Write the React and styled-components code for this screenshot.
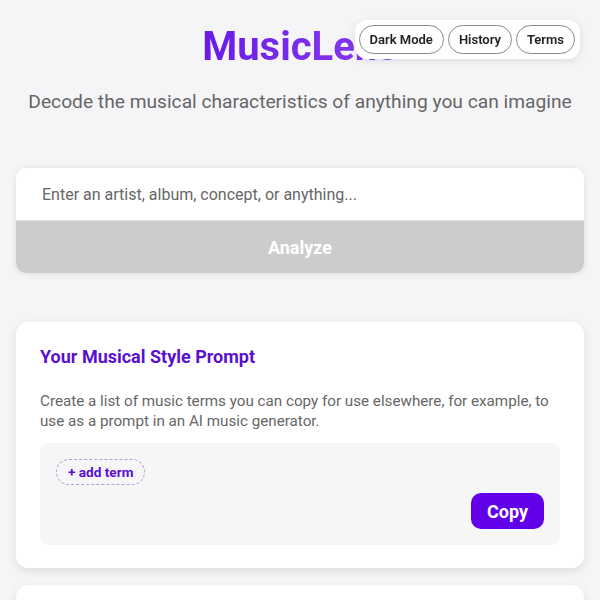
import React, { useState } from 'react';
import styled, { createGlobalStyle } from 'styled-components';

const GlobalStyle = createGlobalStyle`
  * {
    box-sizing: border-box;
  }

  body {
    margin: 0;
    background: #f5f5f7;
    font-family: Roboto, 'Liberation Sans', sans-serif;
    color: #333;
  }
`;

const Page = styled.div`
  padding: 0 16px 40px;
`;

const NavBox = styled.nav`
  position: fixed;
  top: 20px;
  right: 20px;
  display: flex;
  gap: 4px;
  padding: 5px 5px 5px 4px;
  background: #fff;
  border-radius: 12px;
  box-shadow: 0 2px 10px rgba(0, 0, 0, 0.1);
  z-index: 10;
`;

const NavButton = styled.button`
  height: 29px;
  padding: 0 10px;
  border: 1px solid #8a8a8a;
  border-radius: 15px;
  background: #fff;
  font-family: Roboto, sans-serif;
  font-size: 13px;
  font-weight: 600;
  color: #222;
  cursor: pointer;
`;

const Header = styled.header`
  padding-top: 23px;
  text-align: center;
`;

const Title = styled.h1`
  margin: 0;
  font-size: 40px;
  line-height: 48px;
  font-weight: 700;
  display: inline-block;
  background: linear-gradient(90deg, #6a1be6, #8a3cf2);
  -webkit-background-clip: text;
  background-clip: text;
  color: transparent;
`;

const Subtitle = styled.p`
  margin: 19px 0 0;
  font-size: 19.2px;
  line-height: 24px;
  color: #666;
`;

const SearchBox = styled.form`
  margin-top: 54px;
  background: #fff;
  border-radius: 10px;
  overflow: hidden;
  box-shadow: 0 1px 6px rgba(0, 0, 0, 0.1);
`;

const SearchInput = styled.input`
  display: block;
  width: 100%;
  height: 53px;
  padding: 0 26px;
  border: none;
  border-bottom: 1px solid #e6e6e6;
  font-family: Roboto, sans-serif;
  font-size: 16px;
  color: #333;
  outline: none;

  &::placeholder {
    color: #666;
  }
`;

const AnalyzeButton = styled.button`
  display: block;
  width: 100%;
  height: 52px;
  border: none;
  background: ${(p) => (p.disabled ? '#cccccc' : '#6200ea')};
  color: #fff;
  font-family: Roboto, sans-serif;
  font-size: 18px;
  font-weight: 700;
`;

const Card = styled.section`
  margin-top: ${(p) => p.gap || 16}px;
  padding: 24px 24px 23px;
  background: #fff;
  border-radius: 12px;
  box-shadow: 0 3px 10px rgba(0, 0, 0, 0.1);
  min-height: ${(p) => p.minHeight || 0}px;
`;

const CardTitle = styled.h2`
  margin: 0;
  font-size: 18px;
  line-height: 22px;
  font-weight: 700;
  color: #5b0fd0;
`;

const CardText = styled.p`
  margin: 23px 0 0;
  font-size: 15.2px;
  line-height: 20px;
  color: #666;
`;

const TermsBox = styled.div`
  margin-top: 12px;
  padding: 16px;
  background: #f6f6f7;
  border-radius: 8px;
  display: flex;
  flex-direction: column;
`;

const TermRow = styled.div`
  display: flex;
  flex-wrap: wrap;
  gap: 8px;
`;

const AddTerm = styled.button`
  height: 26px;
  padding: 0 11px;
  border: 1px dashed #b99be6;
  border-radius: 13px;
  background: transparent;
  font-family: Roboto, sans-serif;
  font-size: 13.6px;
  font-weight: 700;
  color: #5b0fd0;
`;

const CopyButton = styled.button`
  align-self: flex-end;
  margin-top: 8px;
  height: 36px;
  padding: 0 16px;
  border: none;
  border-radius: 10px;
  background: #6200ea;
  color: #fff;
  font-family: Roboto, sans-serif;
  font-size: 18px;
  font-weight: 700;
`;

export default function App() {
  const [query, setQuery] = useState('');

  return (
    <>
      <GlobalStyle />
      <NavBox>
        <NavButton>Dark Mode</NavButton>
        <NavButton>History</NavButton>
        <NavButton>Terms</NavButton>
      </NavBox>
      <Page>
        <Header>
          <Title>MusicLens</Title>
          <Subtitle>Decode the musical characteristics of anything you can imagine</Subtitle>
        </Header>

        <SearchBox onSubmit={(e) => e.preventDefault()}>
          <SearchInput
            value={query}
            onChange={(e) => setQuery(e.target.value)}
            placeholder="Enter an artist, album, concept, or anything..."
          />
          <AnalyzeButton type="submit" disabled={!query.trim()}>
            Analyze
          </AnalyzeButton>
        </SearchBox>

        <Card gap={49}>
          <CardTitle>Your Musical Style Prompt</CardTitle>
          <CardText>
            Create a list of music terms you can copy for use elsewhere, for example, to use as a
            prompt in an AI music generator.
          </CardText>
          <TermsBox>
            <TermRow>
              <AddTerm>+ add term</AddTerm>
            </TermRow>
            <CopyButton>Copy</CopyButton>
          </TermsBox>
        </Card>

        <Card gap={17} minHeight={120} />
      </Page>
    </>
  );
}
